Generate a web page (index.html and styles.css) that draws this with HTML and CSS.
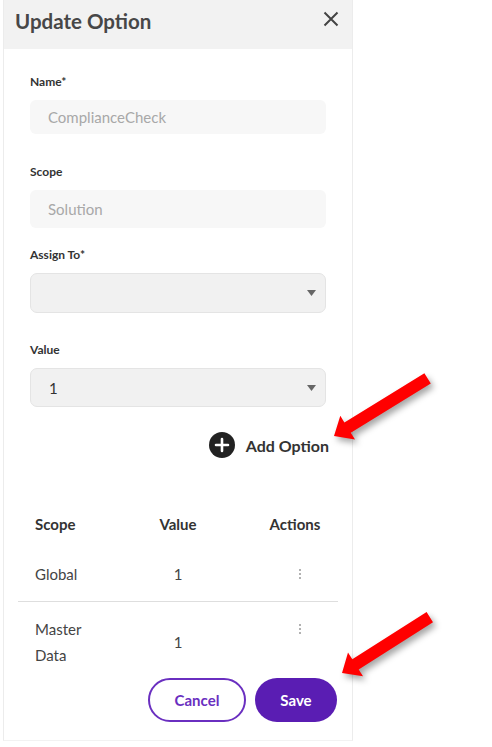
FILE: index.html
```html
<!DOCTYPE html>
<html>
<head>
<meta charset="utf-8">
<link rel="stylesheet" href="styles.css">
</head>
<body>
<div class="panel">
  <div class="header">
    <h1 class="title">Update Option</h1>
    <svg class="close" width="16" height="16" viewBox="0 0 16 16"><path d="M1.5 1.5 L14.5 14.5 M14.5 1.5 L1.5 14.5" stroke="#444" stroke-width="2" fill="none"/></svg>
  </div>
  <div class="body">
    <label class="label l-name">Name*</label>
    <div class="field f-name">ComplianceCheck</div>
    <label class="label l-scope">Scope</label>
    <div class="field f-scope">Solution</div>
    <label class="label l-assign">Assign To*</label>
    <div class="select s-assign"><span></span><svg width="9" height="6" viewBox="0 0 9 6"><path d="M0 0 H9 L4.5 6 Z" fill="#666"/></svg></div>
    <label class="label l-value">Value</label>
    <div class="select s-value"><span>1</span><svg width="9" height="6" viewBox="0 0 9 6"><path d="M0 0 H9 L4.5 6 Z" fill="#666"/></svg></div>
    <div class="add-row">
      <svg class="add-icon" width="26" height="26" viewBox="0 0 26 26"><circle cx="13" cy="13" r="13" fill="#222"/><path d="M13 7 V19 M7 13 H19" stroke="#fff" stroke-width="2.6" stroke-linecap="round"/></svg>
      <span class="add-text">Add Option</span>
    </div>
  </div>
  <div class="table">
    <div class="row head">
      <div class="c1">Scope</div><div class="c2">Value</div><div class="c3">Actions</div>
    </div>
    <div class="row r1">
      <div class="c1">Global</div><div class="c2">1</div><div class="c3"><span class="kebab"><i></i><i></i><i></i></span></div>
    </div>
    <div class="row r2">
      <div class="c1">Master<br>Data</div><div class="c2">1</div><div class="c3 top"><span class="kebab"><i></i><i></i><i></i></span></div>
    </div>
  </div>
  <div class="actions">
    <button class="btn cancel">Cancel</button>
    <button class="btn save">Save</button>
  </div>
</div>
<svg class="arrows" width="492" height="747" viewBox="0 0 492 747">
  <polygon fill="#ff0000" points="334,436 340.3,415.7 344.4,422.5 424.4,373.2 430.8,383.4 350.8,432.7 355,439.5"/>
  <polygon fill="#ff0000" points="342,673 348,652.6 352.3,659.3 426.6,612 433,622.2 358.7,669.5 363,676.2"/>
</svg>
</body>
</html>
```
FILE: styles.css
```css
html, body {
  margin: 0;
  padding: 0;
  background: #fff;
  font-family: Lato, "Open Sans", sans-serif;
  color: #333;
}
.panel {
  margin-left: 3px;
  width: 348px;
  height: 740px;
  border-left: 1px solid #ececec;
  border-right: 1px solid #ececec;
  border-bottom: 1px solid #f2f2f2;
  position: relative;
}
.header {
  height: 49px;
  background: #f2f2f2;
  display: flex;
  align-items: center;
  justify-content: space-between;
  padding: 0 11px 0 11px;
}
.title {
  margin: 0;
  font-size: 20.5px;
  font-weight: 700;
  color: #474747;
  margin-top: -7px;
}
.close {
  margin-top: -11px;
  margin-right: 2px;
}
.body {
  padding: 0 26px;
  display: flex;
  flex-direction: column;
}
.label {
  display: block;
  font-size: 12px;
  font-weight: 700;
  line-height: 16px;
  color: #333;
}
.l-name { margin-top: 25px; }
.l-scope { margin-top: 30px; }
.l-assign { margin-top: 19px; }
.l-value { margin-top: 29px; }
.field {
  margin-top: 10px;
  background: #f7f7f7;
  border-radius: 6px;
  color: #a8a8a8;
  font-size: 15px;
  padding-left: 18px;
  display: flex;
  align-items: center;
}
.f-name { height: 34px; }
.f-scope { height: 38px; }
.select {
  margin-top: 10px;
  background: #f1f1f1;
  border: 1px solid #e4e4e4;
  border-radius: 7px;
  display: flex;
  align-items: center;
  justify-content: space-between;
  padding: 0 9px 0 18px;
  font-size: 15px;
  color: #333;
}
.s-assign { height: 38px; }
.s-value { height: 37px; }
.add-row {
  margin-top: 25px;
  display: flex;
  justify-content: flex-end;
  align-items: center;
  gap: 11px;
  height: 26px;
}
.add-text {
  font-size: 16px;
  font-weight: 700;
  color: #333;
  margin-right: -3px;
}
.table {
  margin: 56px 14px 0 14px;
}
.row {
  display: grid;
  grid-template-columns: 110px 100px 1fr;
  font-size: 15px;
}
.row > div { display: flex; align-items: center; }
.c1 { padding-left: 17px; }
.c2 { justify-content: center; }
.c3 { justify-content: center; padding-left: 24px; }
.head { font-weight: 700; color: #333; height: 20px; }
.r1 { margin-top: 30px; height: 20px; color: #444; border-bottom: 1px solid #dedede; padding-bottom: 17px; }
.r2 { margin-top: 14px; height: 52px; color: #444; line-height: 26px; }
.r2 .c1 { display: block; padding-top: 0; }
.r2 .c3.top { align-items: flex-start; padding-top: 8px; }
.kebab {
  display: flex;
  flex-direction: column;
  gap: 2px;
  margin-left: 10px;
}
.kebab i {
  display: block;
  width: 2px;
  height: 2px;
  border-radius: 1px;
  background: #999;
}
.actions {
  margin-top: 10px;
  display: flex;
  justify-content: flex-end;
  gap: 9px;
  padding-right: 15px;
}
.btn {
  font-family: Lato, "Open Sans", sans-serif;
  font-size: 15px;
  font-weight: 700;
  height: 44px;
  border-radius: 22px;
  cursor: pointer;
}
.cancel {
  width: 98px;
  background: #fff;
  border: 2px solid #6a2fc0;
  color: #6a2fc0;
}
.save {
  width: 82px;
  background: #5a1db3;
  border: none;
  color: #fff;
}
.arrows {
  position: absolute;
  top: 0;
  left: 0;
  pointer-events: none;
  filter: drop-shadow(3px 4px 3px rgba(0,0,0,0.35));
}
```
